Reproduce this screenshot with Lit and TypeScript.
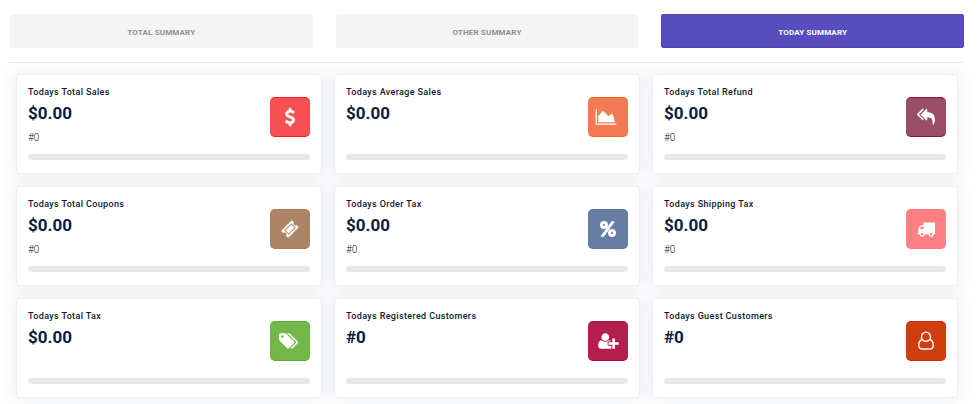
import { LitElement, html, css, svg, nothing } from "lit";
import { customElement, property, state } from "lit/decorators.js";
import { classMap } from "lit/directives/class-map.js";

const icons: Record<string, { box: string; wide?: boolean; art: unknown }> = {
  dollar: {
    box: "0 0 1792 1792",
    art: svg`<path d="M1362 1185q0 153-99.5 263.5t-258.5 136.5v175q0 14-9 23t-23 9h-135q-13 0-22.5-9.5t-9.5-22.5v-175q-66-9-127.5-31t-101.5-44.5-74-48-46.5-37.5-17.5-18q-17-21-2-41l103-135q7-10 23-12 15-2 24 9l2 2q113 99 243 125 37 8 74 8 81 0 142.5-43t61.5-122q0-28-15-53t-33.5-42-58.5-37.5-66-32-80-32.5q-39-16-61.5-25t-61.5-26.5-62.5-31-56.5-35.5-53.5-42.5-43.5-49-35.5-58-21-66.5-8.5-78q0-138 98-242t255-134v-180q0-13 9.5-22.5t22.5-9.5h135q14 0 23 9t9 23v176q57 6 110.5 23t87 33.5 63.5 37.5 39 29 15 14q17 18 5 38l-81 146q-8 15-23 16-14 3-27-7-3-3-14.5-12t-39-26.5-58.5-32-74.5-26-85.5-11.5q-95 0-155 43t-60 111q0 26 8.5 48t29.5 41.5 39.5 33 56 31 60.5 27 70 27.5q53 20 81 31.5t76 35 75.5 42.5 62 50 53 63.5 31.5 76.5 13 94z" stroke="currentColor" stroke-width="60"/>`,
  },
  area: {
    box: "250 0 2048 1792",
    wide: true,
    art: svg`<path d="M2048 1536v128h-2048v-1536h128v1408h1920zm-384-1024l256 896h-1664v-576l448-576 576 576z"/>`,
  },
  reply: {
    box: "0 0 1792 1792",
    art: svg`<path d="M640 1082v70q0 42-39 59-13 5-25 5-27 0-45-19l-512-512q-19-19-19-45t19-45l512-512q29-31 70-14 39 17 39 59v69l-397 398q-19 19-19 45t19 45zm1152 58q0 58-17 133.5t-38.5 138-48 125-40.5 90.5l-20 40q-8 17-28 17-6 0-9-1-25-8-23-34 43-400-106-565-64-71-170.5-110.5t-267.5-52.5v251q0 42-39 59-13 5-25 5-27 0-45-19l-512-512q-19-19-19-45t19-45l512-512q29-31 70-14 39 17 39 59v262q411 28 599 221 169 173 169 509z"/>`,
  },
  ticket: {
    box: "0 0 1792 1792",
    art: svg`<path d="M1024 452l316 316-572 572-316-316zm-211 979l618-618q19-19 19-45t-19-45l-362-362q-18-18-45-18t-45 18l-618 618q-19 19-19 45t19 45l362 362q18 18 45 18t45-18zm889-637l-907 908q-37 37-90.5 37t-90.5-37l-126-126q56-56 56-136t-56-136-136-56-136 56l-125-126q-37-37-37-90.5t37-90.5l907-906q37-37 90.5-37t90.5 37l125 125q-56 56-56 136t56 136 136 56 136-56l126 125q37 37 37 90.5t-37 90.5z"/>`,
  },
  percent: {
    box: "0 0 1792 1792",
    art: svg`<g fill="none" stroke="currentColor" stroke-width="290"><circle cx="496" cy="496" r="250"/><circle cx="1296" cy="1296" r="250"/></g><path d="M1280 128h200q26 0 45 19t19 45q0 21-13 38L495 1638q-19 26-51 26H244q-26 0-45-19t-19-45q0-21 13-38L1229 154q19-26 51-26z"/>`,
  },
  truck: {
    box: "0 0 1792 1792",
    art: svg`<path d="M640 1408q0-52-38-90t-90-38-90 38-38 90 38 90 90 38 90-38 38-90zm-384-512h384v-256h-158q-13 0-22 9l-195 195q-9 9-9 22v30zm1280 512q0-52-38-90t-90-38-90 38-38 90 38 90 90 38 90-38 38-90zm256-1088v1024q0 15-4 26.5t-13.5 18.5-16.5 11.5-23.5 6-22.5 2-25.5 0-22.5-.5q0 106-75 181t-181 75-181-75-75-181h-384q0 106-75 181t-181 75-181-75-75-181h-64q-3 0-22.5.5t-25.5 0-22.5-2-23.5-6-16.5-11.5-13.5-18.5-4-26.5q0-26 19-45t45-19v-320q0-8-.5-35t0-38 2.5-34.5 6.5-37 14-30.5 22.5-30l198-198q19-19 50.5-32t58.5-13h160v-192q0-26 19-45t45-19h1024q26 0 45 19t19 45z"/>`,
  },
  tags: {
    box: "250 0 2048 1792",
    wide: true,
    art: svg`<path d="M576 448q0-53-37.5-90.5t-90.5-37.5-90.5 37.5-37.5 90.5 37.5 90.5 90.5 37.5 90.5-37.5 37.5-90.5zm1067 576q0 53-37 90l-491 492q-39 37-91 37-53 0-90-37l-715-716q-38-37-64.5-101t-26.5-117v-416q0-52 38-90t90-38h416q53 0 117 26.5t102 64.5l715 714q37 39 37 91zm384 0q0 53-37 90l-491 492q-39 37-91 37-36 0-59-14t-53-45l470-470q37-37 37-90 0-52-37-91l-715-714q-38-38-102-64.5t-117-26.5h224q53 0 117 26.5t102 64.5l715 714q37 39 37 91z"/>`,
  },
  userPlus: {
    box: "0 0 2048 1792",
    wide: true,
    art: svg`<path d="M704 896q-159 0-271.5-112.5t-112.5-271.5 112.5-271.5 271.5-112.5 271.5 112.5 112.5 271.5-112.5 271.5-271.5 112.5zm960 128h352q13 0 22.5 9.5t9.5 22.5v192q0 13-9.5 22.5t-22.5 9.5h-352v352q0 13-9.5 22.5t-22.5 9.5h-192q-13 0-22.5-9.5t-9.5-22.5v-352h-352q-13 0-22.5-9.5t-9.5-22.5v-192q0-13 9.5-22.5t22.5-9.5h352v-352q0-13 9.5-22.5t22.5-9.5h192q13 0 22.5 9.5t9.5 22.5v352zm-736 224q0 52 38 90t90 38h256v238q-68 50-171 50h-874q-121 0-194-69t-73-190q0-53 3.5-103.5t14-109 26.5-108.5 43-97.5 62-81 85.5-53.5 111.5-20q19 0 39 17 79 61 154.5 91.5t164.5 30.5 164.5-30.5 154.5-91.5q20-17 39-17 132 0 217 96h-223q-52 0-90 38t-38 90v192z"/>`,
  },
  user: {
    box: "0 0 1792 1792",
    art: svg`<g fill="none" stroke="currentColor" stroke-width="140"><circle cx="896" cy="470" r="448"/><path d="M548 752C300 808 180 1018 180 1294c0 220 130 392 300 392h832c170 0 300-172 300-392 0-276-120-486-368-542"/></g>`,
  },
};

interface Metric {
  title: string;
  value: string;
  count?: string;
  icon: string;
  tone: string;
}

@customElement("metric-card")
class MetricCard extends LitElement {
  @property({ attribute: false }) metric!: Metric;

  static styles = css`
    :host {
      display: block;
      box-sizing: border-box;
      min-width: 0;
      padding: 11px 11px 13px;
      border: 1px solid #eceef1;
      border-radius: 3px;
      background: #fff;
      color: #0b1c3f;
    }
    .top {
      display: flex;
      justify-content: space-between;
      align-items: center;
    }
    .info {
      min-height: 62px;
    }
    .title,
    .value,
    .count {
      margin: 0;
    }
    .title {
      font-size: 9px;
      line-height: 12px;
      font-weight: 500;
      letter-spacing: 0.04em;
      color: #0b1830;
    }
    .value {
      margin-top: 4px;
      font-size: 17px;
      line-height: 22px;
      font-weight: 700;
    }
    .count {
      margin-top: 8px;
      font-size: 10px;
      line-height: 12px;
      font-weight: 300;
      color: #0b1830;
    }
    .tile {
      box-sizing: border-box;
      display: flex;
      flex: none;
      align-items: center;
      justify-content: center;
      width: 40px;
      height: 40px;
      border-style: solid;
      border-width: 1px 0;
      border-radius: 5px;
    }
    .icon {
      display: block;
      width: 18px;
      height: 18px;
      fill: currentColor;
      color: #fff;
    }
    .icon.wide {
      width: 21px;
    }
    .track {
      height: 6px;
      margin-top: 6px;
      border-radius: 3px;
      background: #e9e9e9;
    }
    .red { background: #f65152; border-color: #f52222; }
    .orange { background: #f37b53; border-color: #f4641f; }
    .plum { background: #994d66; border-color: #8c0d4a; }
    .brown { background: #ab8465; border-color: #b07b50; }
    .blue { background: #667ea5; border-color: #5f7ba8; }
    .pink { background: #ff8084; border-color: #ff777c; }
    .green { background: #72b748; border-color: #62ab2c; }
    .crimson { background: #b41e4f; border-color: #b01040; }
    .rust { background: #d03d0e; border-color: #c72d05; }
  `;

  render() {
    const { title, value, count, icon, tone } = this.metric;
    const { box, wide, art } = icons[icon];
    return html`
      <div class="top">
        <div class="info">
          <h3 class="title">${title}</h3>
          <p class="value">${value}</p>
          ${count ? html`<p class="count">${count}</p>` : nothing}
        </div>
        <div class="tile ${tone}">
          <svg class=${classMap({ icon: true, wide: !!wide })} viewBox=${box} overflow="visible" aria-hidden="true">${art}</svg>
        </div>
      </div>
      <div class="track" role="progressbar" aria-label=${title} aria-valuenow="0"></div>
    `;
  }
}

@customElement("app-root")
class AppRoot extends LitElement {
  @state() private active = 2;

  private tabs = ["Total Summary", "Other Summary", "Today Summary"];

  private metrics: Metric[] = [
    { title: "Todays Total Sales", value: "$0.00", count: "#0", icon: "dollar", tone: "red" },
    { title: "Todays Average Sales", value: "$0.00", icon: "area", tone: "orange" },
    { title: "Todays Total Refund", value: "$0.00", count: "#0", icon: "reply", tone: "plum" },
    { title: "Todays Total Coupons", value: "$0.00", count: "#0", icon: "ticket", tone: "brown" },
    { title: "Todays Order Tax", value: "$0.00", count: "#0", icon: "percent", tone: "blue" },
    { title: "Todays Shipping Tax", value: "$0.00", count: "#0", icon: "truck", tone: "pink" },
    { title: "Todays Total Tax", value: "$0.00", icon: "tags", tone: "green" },
    { title: "Todays Registered Customers", value: "#0", icon: "userPlus", tone: "crimson" },
    { title: "Todays Guest Customers", value: "#0", icon: "user", tone: "rust" },
  ];

  static styles = css`
    :host {
      display: block;
      background: #fff;
      font-family: Roboto, "Liberation Sans", sans-serif;
    }
    .tabs {
      display: grid;
      grid-template-columns: repeat(3, 1fr);
      gap: 23px;
      margin: 0 13px 0 10px;
      padding: 14px 0;
      border-bottom: 1px solid #e6e7ea;
    }
    .tab {
      height: 34px;
      padding: 3px 0 0;
      border: 0;
      border-radius: 3px;
      background: #f4f4f4;
      color: #8f8f8f;
      font-family: inherit;
      font-size: 8px;
      line-height: 12px;
      font-weight: 700;
      letter-spacing: 0.02em;
      text-transform: uppercase;
      cursor: pointer;
    }
    .tab.active {
      background: #574dbf;
      color: #fff;
      box-shadow: inset 0 0 0 1px #5145b8;
    }
    .cards {
      display: grid;
      grid-template-columns: repeat(3, 1fr);
      gap: 12px;
      padding: 11px 19px 6px 16px;
      overflow: hidden;
      isolation: isolate;
    }
    .card {
      position: relative;
    }
    .card::before {
      content: "";
      position: absolute;
      inset: 0;
      z-index: -1;
      box-shadow: 0 0 16px 2px rgba(50, 75, 125, 0.1);
    }
  `;

  render() {
    return html`
      <div class="tabs" role="tablist">
        ${this.tabs.map(
          (label, i) => html`<button
            type="button"
            role="tab"
            class=${classMap({ tab: true, active: i === this.active })}
            aria-selected=${i === this.active}
            @click=${() => (this.active = i)}
          >${label}</button>`
        )}
      </div>
      <main class="cards">
        ${this.metrics.map((m) => html`<metric-card class="card" .metric=${m}></metric-card>`)}
      </main>
    `;
  }
}
